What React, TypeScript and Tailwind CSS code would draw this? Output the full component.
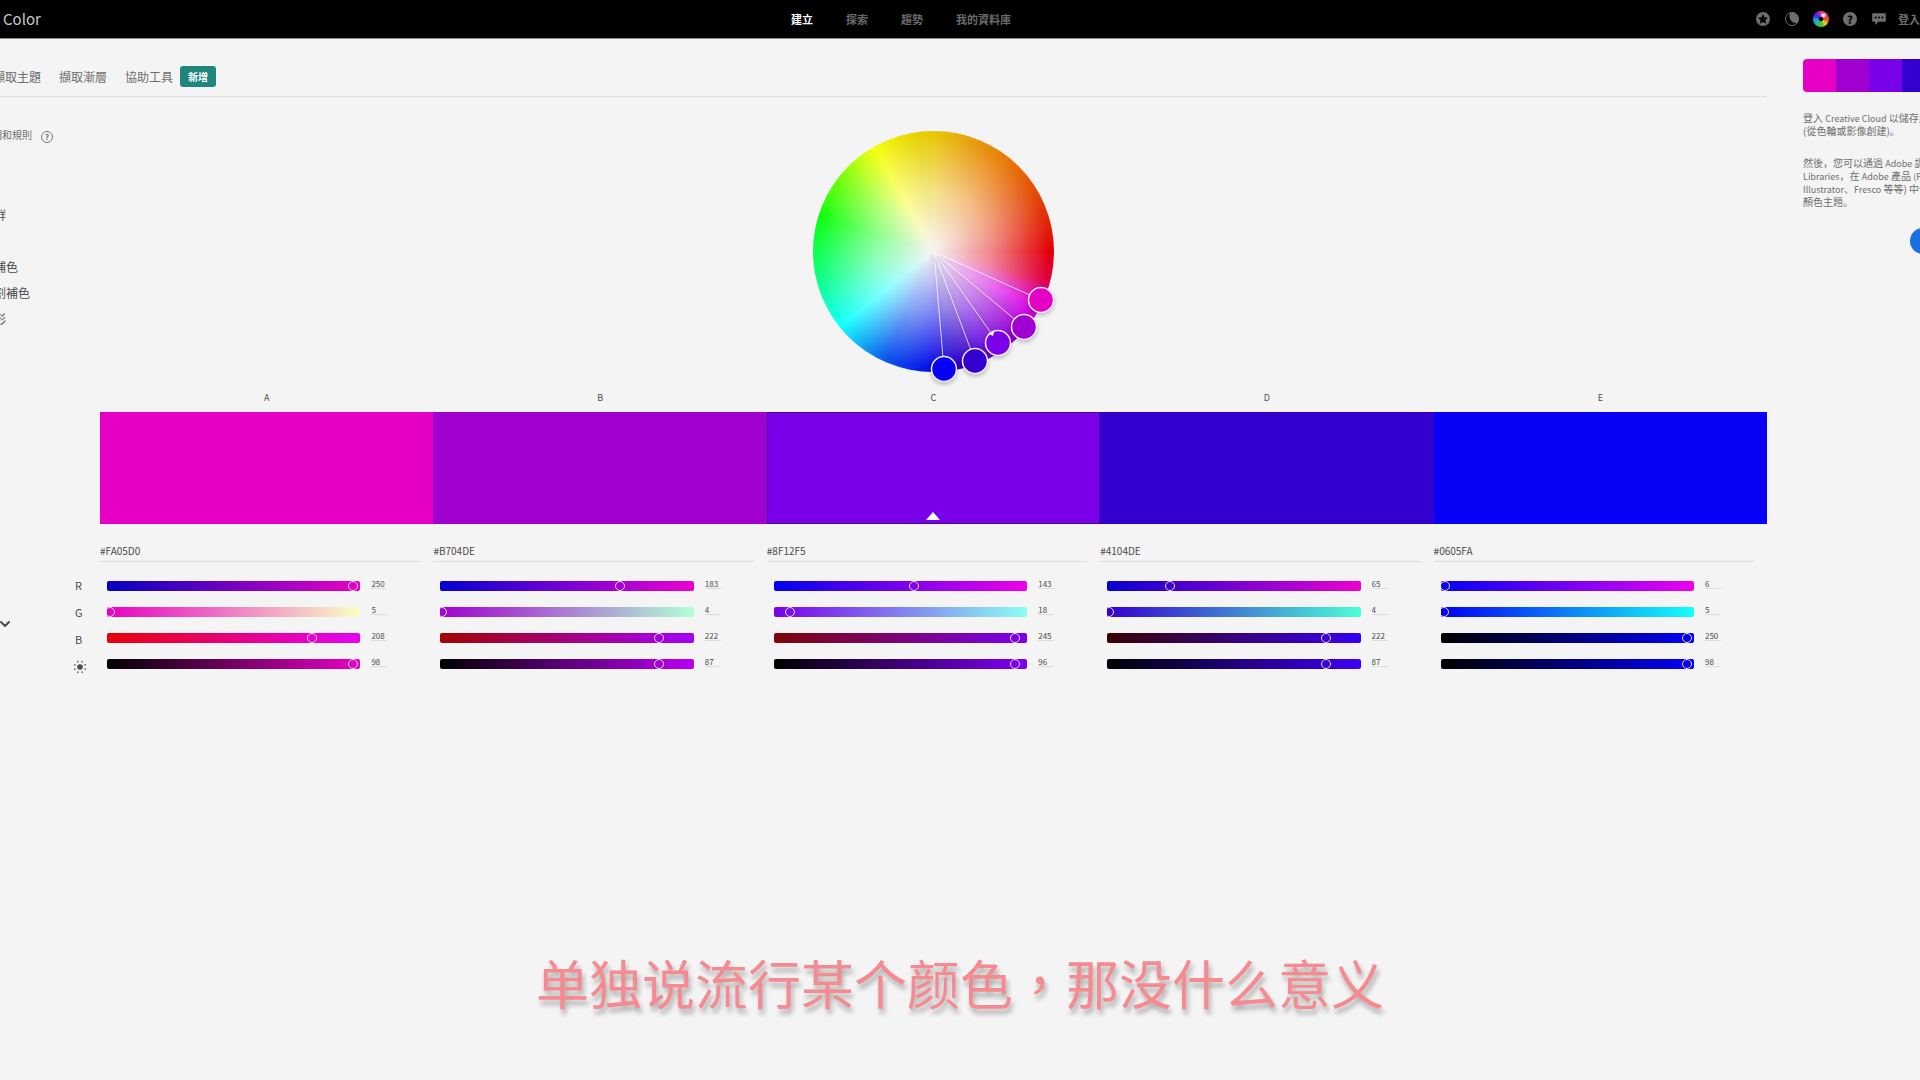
import { useState } from "react";
import { ChevronDown } from "lucide-react";

interface Swatch {
  label: string;
  hex: string;
  color: string;
  r: number;
  g: number;
  b: number;
  level: number;
  // start and end colour of each track, in the order R, G, B, brightness
  tracks: [string, string][];
  // place of the marker on the wheel
  x: number;
  y: number;
}

const SWATCHES: Swatch[] = [
  {
    label: "A", hex: "#FA05D0", color: "#e600c3", r: 250, g: 5, b: 208, level: 98,
    tracks: [["#0500bd", "#e900c4"], ["#e600c3", "#f9ffc6"], ["#e80008", "#e600f6"], ["#000000", "#ea00c6"]],
    x: 228, y: 169,
  },
  {
    label: "B", hex: "#B704DE", color: "#a000d0", r: 183, g: 4, b: 222, level: 87,
    tracks: [["#0400d0", "#ec00d2"], ["#a000d0", "#b3ffd6"], ["#a40004", "#a400fa"], ["#000000", "#bc00f6"]],
    x: 211, y: 196,
  },
  {
    label: "C", hex: "#8F12F5", color: "#7a00ea", r: 143, g: 18, b: 245, level: 96,
    tracks: [["#0200ee", "#ee00ea"], ["#7a00ea", "#8cfff4"], ["#7c0606", "#7a00f0"], ["#000000", "#7e00f2"]],
    x: 185, y: 212,
  },
  {
    label: "D", hex: "#4104DE", color: "#3400d0", r: 65, g: 4, b: 222, level: 87,
    tracks: [["#0400d0", "#ec00d2"], ["#3400d0", "#4cffd8"], ["#3a0002", "#3600f4"], ["#000000", "#3e00f4"]],
    x: 162, y: 230,
  },
  {
    label: "E", hex: "#0605FA", color: "#0600f6", r: 6, g: 5, b: 250, level: 98,
    tracks: [["#0400f2", "#ec00f0"], ["#0400f2", "#14fffa"], ["#000000", "#0400f6"], ["#000000", "#0400f4"]],
    x: 131, y: 238,
  },
];

const RULES = ["類比", "單色", "三元群", "補色", "分割補色", "雙分割補色", "正方形", "複合", "濃度", "自訂"];
const NAV = ["建立", "探索", "趨勢", "我的資料庫"];
const TABS = ["擷取主題", "擷取漸層", "協助工具"];

function StarIcon() {
  return (
    <svg viewBox="0 0 14 14" className="size-3.5">
      <circle cx="7" cy="7" r="7" fill="#6e6e6e" />
      <path d="M7 2l1.500 3.300 3.600.4-2.700 2.400.8 3.600L7 9.900l-3.200 1.800.8-3.600L1.900 5.700l3.600-.4z" fill="#000" />
    </svg>
  );
}

function MoonIcon() {
  return (
    <svg viewBox="0 0 14 14" className="size-3.5">
      <circle cx="7" cy="7" r="6.500" fill="none" stroke="#6e6e6e" strokeWidth="1" />
      <path d="M5 .7A6.600 6.600 0 0 1 12 11.300C6.500 11.500 2.800 6 5 .7z" fill="#6e6e6e" />
    </svg>
  );
}

function ChatIcon() {
  return (
    <svg viewBox="0 0 14 14" className="size-3.5">
      <path d="M1 1.200h12a.8.8 0 0 1 .8.8v7a.8.8 0 0 1-.8.8H6.400L3.200 13V9.800H1A.8.8 0 0 1 .2 9V2a.8.8 0 0 1 .8-.8z" fill="#6e6e6e" />
      <circle cx="3.600" cy="5.500" r="1.100" fill="#000" />
      <circle cx="7" cy="5.500" r="1.100" fill="#000" />
      <circle cx="10.400" cy="5.500" r="1.100" fill="#000" />
    </svg>
  );
}

function SunIcon() {
  return (
    <svg viewBox="0 0 14 14" className="size-3.5" stroke="#4b4b4b" strokeWidth="1.2">
      <circle cx="7" cy="7" r="2.800" fill="#4b4b4b" stroke="none" />
      {[22, 67, 112, 157, 202, 247, 292, 337].map((a) => (
        <path key={a} d="M7 2.200V.600" transform={`rotate(${a} 7 7)`} />
      ))}
    </svg>
  );
}

function Header() {
  return (
    <header className="flex h-[39px] items-center justify-between overflow-hidden border-b border-[#8a8a8a] bg-black">
      <a href="#" className="w-[46px] pl-[3px] text-[15px] text-[#c8c8c8]">Color</a>
      <nav className="flex gap-[33px] text-[11px] font-bold">
        {NAV.map((item, i) => (
          <a key={item} href="#" className={i === 0 ? "text-white" : "text-[#6a6a6a]"}>{item}</a>
        ))}
      </nav>
      <div className="flex w-[164px] shrink-0 items-center gap-3">
        <div className="flex shrink-0 items-center gap-[15px]">
          <button aria-label="Star"><StarIcon /></button>
          <button aria-label="Theme"><MoonIcon /></button>
          <button
            aria-label="Color"
            className="-mx-px size-4 rounded-full bg-[radial-gradient(circle_at_66%_28%,#fff_0_6%,transparent_18%),radial-gradient(circle,#000_0_14%,transparent_24%),conic-gradient(#e040c0,#ff3060_55deg,#f05020_95deg,#e0d020_135deg,#40c030_180deg,#10c8a0_225deg,#20a0f0_260deg,#3030e0_300deg,#8020d0_330deg,#e040c0)]"
          />
          <button className="size-3.5 rounded-full bg-[#6e6e6e] text-center text-[11px] leading-[14px] font-black text-black">?</button>
          <button aria-label="Chat"><ChatIcon /></button>
        </div>
        <a href="#" className="text-[11px] font-bold whitespace-nowrap text-[#6e6e6e]">登入</a>
      </div>
    </header>
  );
}

function Tabs() {
  return (
    <div className="flex h-[58px] items-center border-b border-[#e0e0e0] pt-[18px]">
      <nav className="-ml-[7px] flex gap-[18px] text-[12px] text-[#6e6e6e]">
        {TABS.map((tab) => (
          <a key={tab} href="#" className="whitespace-nowrap">{tab}</a>
        ))}
      </nav>
      <span className="ml-[7px] rounded-[3px] bg-[#1f857d] px-2 text-[10px] leading-[21px] font-bold whitespace-nowrap text-white">新增</span>
    </div>
  );
}

function Rules() {
  return (
    <div className="w-[72px] shrink-0 pt-[30px]">
      <div className="-ml-7 flex items-center gap-[9px]">
        <h2 className="text-[10px] leading-4 whitespace-nowrap text-[#6e6e6e]">色彩調和規則</h2>
        <button className="mt-1 size-3 shrink-0 rounded-full border border-[#7a7a7a] text-center text-[8px] leading-[10px] font-bold text-[#6e6e6e]">?</button>
      </div>
      <ul className="mt-[7px] -ml-[30px] text-[12px] leading-[26px] text-[#4b4b4b]">
        {RULES.map((rule) => (
          <li key={rule}>
            <button className="block whitespace-nowrap">{rule}</button>
          </li>
        ))}
      </ul>
      <button aria-label="Color mode" className="mt-[206px] -ml-[3px] block">
        <ChevronDown className="size-4 text-[#4b4b4b]" strokeWidth={3} />
      </button>
    </div>
  );
}

function Wheel() {
  return (
    <div className="relative mx-auto size-[241px] rounded-full bg-[radial-gradient(circle_closest-side,#f8f4f4,rgba(255,255,255,0.5)_50%,rgba(255,255,255,0)_96%),conic-gradient(#e8c808,#e8a010_18deg,#e87808_40deg,#e24808_62deg,#e20008_90deg,#e00040_104deg,#e000e8_118deg,#9800d8_135deg,#6800e0_150deg,#3000c8_165deg,#0808e8_180deg,#0c58ec_204deg,#18ffff_231deg,#10ff80_258deg,#10ff10_287deg,#80ff10_310deg,#f4ff14_330deg,#e8d008_352deg,#e8c808)]">
      <svg viewBox="0 0 241 241" className="absolute inset-0 overflow-visible drop-shadow-[0_2px_2px_rgba(0,0,0,0.25)]">
        {SWATCHES.map((s) => (
          <line key={s.label} x1="121" y1="121" x2={s.x} y2={s.y} stroke="#fff" strokeOpacity="0.75" />
        ))}
        {SWATCHES.map((s) => (
          <circle key={s.label} cx={s.x} cy={s.y} r="12.500" fill={s.color} stroke="#f4ecfc" strokeWidth="1.500" />
        ))}
        <path d="M175 202.500l6.500-3-1.500 5.500z" fill="#fff" />
      </svg>
    </div>
  );
}

interface ChannelProps {
  name: string;
  value: number;
  max: number;
  track: [string, string];
}

function Channel({ name, value, max, track }: ChannelProps) {
  const [current, setCurrent] = useState(value);

  return (
    <div className="flex h-[26px] items-center pr-[46px] pl-[7px]">
      <div
        className="h-2.5 flex-1 overflow-hidden rounded-[2px]"
        style={{ backgroundImage: `linear-gradient(to right, ${track[0]}, ${track[1]})` }}
      >
        <input
          type="range"
          aria-label={name}
          min={0}
          max={max}
          value={current}
          onChange={(e) => setCurrent(Number(e.target.value))}
          className="-ml-[7px] block h-2.5 w-[calc(100%+10px)] appearance-none bg-transparent [&::-webkit-slider-thumb]:size-2.5 [&::-webkit-slider-thumb]:appearance-none [&::-webkit-slider-thumb]:rounded-full [&::-webkit-slider-thumb]:border [&::-webkit-slider-thumb]:border-[#f0d8f8]"
        />
      </div>
      <input
        aria-label={`${name} value`}
        value={current}
        onChange={(e) => setCurrent(Number(e.target.value) || 0)}
        className="mb-1 ml-[11px] h-2.5 w-4 border-b border-[#dcdcdc] text-[8px] leading-[9px] text-[#4b4b4b]"
      />
    </div>
  );
}

function Editor() {
  return (
    <main className="min-w-0 flex-1 pt-[34px] pl-7 text-[#4b4b4b]">
      <Wheel />
      <div className="mt-[19px] grid grid-cols-5 text-center text-[9px] leading-[14px]">
        {SWATCHES.map((s) => (
          <span key={s.label}>{s.label}</span>
        ))}
      </div>
      <div className="mt-[7px] grid h-28 grid-cols-5">
        {SWATCHES.map((s) => (
          <button
            key={s.label}
            aria-label={s.hex}
            className={`flex items-end justify-center pb-[3px] ${s.label === "C" ? "border border-[#4a0a9a]" : ""}`}
            style={{ backgroundColor: s.color }}
          >
            {s.label === "C" && (
              <svg viewBox="0 0 14 8" className="h-2 w-3.5">
                <path d="M7 0l7 8H0z" fill="#fff" />
              </svg>
            )}
          </button>
        ))}
      </div>
      <div className="flex">
        <div className="mt-12 -ml-7 w-7 shrink-0 pl-[3px] text-[11px] leading-[27px]">
          <div>R</div>
          <div>G</div>
          <div>B</div>
          <div className="-ml-0.5 flex h-[27px] items-center"><SunIcon /></div>
        </div>
        <div className="grid flex-1 grid-cols-5">
          {SWATCHES.map((s) => (
            <section key={s.label} className="min-w-0">
              <div className="mt-4 mb-[11px] pr-[13px]">
                <input
                  aria-label={`Hex ${s.label}`}
                  defaultValue={s.hex}
                  className="block h-[22px] w-full border-b border-[#dcdcdc] text-[10px]"
                />
              </div>
              <Channel name={`${s.label} red`} value={s.r} max={255} track={s.tracks[0]} />
              <Channel name={`${s.label} green`} value={s.g} max={255} track={s.tracks[1]} />
              <Channel name={`${s.label} blue`} value={s.b} max={255} track={s.tracks[2]} />
              <Channel name={`${s.label} brightness`} value={s.level} max={100} track={s.tracks[3]} />
            </section>
          ))}
        </div>
      </div>
    </main>
  );
}

function Latin({ children }: { children: string }) {
  return <span className="text-[9px] leading-none">{children}</span>;
}

function SavePanel() {
  return (
    <aside className="w-[153px] shrink-0 overflow-hidden pt-5 pl-9 font-['Noto_Sans_CJK_SC',sans-serif] text-[10px] leading-[13px] whitespace-nowrap text-[#6e6e6e]">
      <div className="flex h-[33px] w-[165px] overflow-hidden rounded-[4px]">
        {SWATCHES.map((s) => (
          <div key={s.label} className="flex-1" style={{ backgroundColor: s.color }} />
        ))}
      </div>
      <p className="mt-[19px]">
        登入 <Latin>Creative Cloud</Latin> 以儲存此色彩主題
        <br />
        (從色輪或影像創建)。
      </p>
      <p className="mt-[19px]">
        然後，您可以通過 <Latin>Adobe</Latin> 調色盤
        <br />
        <Latin>Libraries</Latin>，在 <Latin>Adobe</Latin> 產品 <Latin>(Photoshop</Latin>、
        <br />
        <Latin>Illustrator</Latin>、<Latin>Fresco</Latin> 等等) 中使用此
        <br />
        顏色主題。
      </p>
      <button aria-label="Sign in" className="mt-5 ml-[107px] block h-[26px] w-20 rounded-full bg-[#1b6fe0]" />
    </aside>
  );
}

export default function App() {
  return (
    <div className="relative min-h-screen overflow-hidden bg-[#f4f4f4] font-['Noto_Sans_CJK_TC',sans-serif]">
      <Header />
      <div className="flex">
        <div className="min-w-0 flex-1">
          <Tabs />
          <div className="flex">
            <Rules />
            <Editor />
          </div>
        </div>
        <SavePanel />
      </div>
      <p className="absolute inset-x-0 bottom-[58px] text-center text-[53px] leading-[80px] text-[#f58a91] [text-shadow:2px_5px_5px_rgba(0,0,0,0.3)]">
        单独说流行某个颜色，那没什么意义
      </p>
    </div>
  );
}
